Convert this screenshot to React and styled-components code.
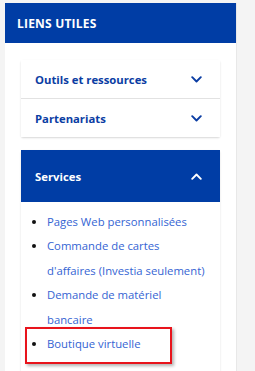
import React from "react";
import styled, { createGlobalStyle } from "styled-components";

const GlobalStyle = createGlobalStyle`
  body {
    margin: 0;
    background: #f4f4f4;
    font-family: "Open Sans", "Liberation Sans", sans-serif;
  }
`;

const Chevron = ({ up, color }) => (
  <svg width="11" height="7" viewBox="0 0 11 7" fill="none">
    <path
      d={up ? "M1.2 5.8L5.5 1.5l4.3 4.3" : "M1.2 1.2L5.5 5.5l4.3-4.3"}
      stroke={color}
      strokeWidth="1.9"
      strokeLinecap="round"
      strokeLinejoin="round"
    />
  </svg>
);

const App = () => {
  const services = [
    "Pages Web personnalisées",
    "Commande de cartes d'affaires (Investia seulement)",
    "Demande de matériel bancaire",
  ];

  return (
    <>
      <GlobalStyle />
      <Panel>
        <PanelHeader>Liens utiles</PanelHeader>
        <PanelBody>
          <Card>
            <Row>
              <RowTitle>Outils et ressources</RowTitle>
              <Chevron color="#0b3da3" />
            </Row>
            <Row>
              <RowTitle>Partenariats</RowTitle>
              <Chevron color="#0b3da3" />
            </Row>
          </Card>
          <Card>
            <Row open>
              <RowTitle open>Services</RowTitle>
              <Chevron up color="#ffffff" />
            </Row>
            <LinkList>
              {services.map((s) => (
                <LinkItem key={s}>
                  <a href="#">{s}</a>
                </LinkItem>
              ))}
              <LinkItem highlighted>
                <a href="#">Boutique virtuelle</a>
              </LinkItem>
            </LinkList>
          </Card>
        </PanelBody>
      </Panel>
    </>
  );
};

const Panel = styled.div`
  margin: 3px 0 0 5px;
  width: 231px;
  min-height: 368px;
  background: #fff;
  border-right: 1px solid #e8e8e8;
`;

const PanelHeader = styled.div`
  height: 40px;
  display: flex;
  align-items: center;
  padding-left: 12px;
  background: #003da5;
  color: #fff;
  font-size: 12px;
  font-weight: 700;
  text-transform: uppercase;
  letter-spacing: 0.2px;
`;

const PanelBody = styled.div`
  padding: 17px 16px 0;
  display: flex;
  flex-direction: column;
  gap: 13px;
`;

const Card = styled.div`
  background: #fff;
  box-shadow: 0 1px 2px rgba(0, 0, 0, 0.16);
  border-radius: 2px;
`;

const Row = styled.div`
  display: flex;
  align-items: center;
  justify-content: space-between;
  height: ${(p) => (p.open ? "52px" : "38px")};
  padding: 0 18px 0 14px;
  background: ${(p) => (p.open ? "#003da5" : "#fff")};
  & + & {
    border-top: 1px solid #e2e2e2;
  }
`;

const RowTitle = styled.span`
  font-size: 11.3px;
  font-weight: 700;
  color: ${(p) => (p.open ? "#fff" : "#0b3da3")};
`;

const LinkList = styled.ul`
  margin: 0;
  padding: 8px 13px 20px 26px;
  list-style: disc;
  color: #111;
`;

const LinkItem = styled.li`
  position: relative;
  font-size: 11.3px;
  line-height: 24.4px;
  a {
    color: #3464d3;
    text-decoration: none;
  }
  ${(p) =>
    p.highlighted &&
    `
    &::after {
      content: "";
      position: absolute;
      left: -22px;
      top: -5px;
      width: 143px;
      height: 33px;
      border: 2px solid #e8141c;
      box-shadow: 2px 2px 3px rgba(0, 0, 0, 0.3);
      pointer-events: none;
    }
  `}
`;

export default App;
